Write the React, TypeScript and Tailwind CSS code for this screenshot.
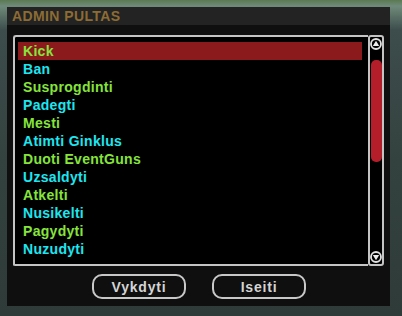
import React from "react";

const items: { t: string; c: string }[] = [
  { t: "Kick", c: "#86e43c" },
  { t: "Ban", c: "#1ee6f0" },
  { t: "Susprogdinti", c: "#86e43c" },
  { t: "Padegti", c: "#1ee6f0" },
  { t: "Mesti", c: "#86e43c" },
  { t: "Atimti Ginklus", c: "#1ee6f0" },
  { t: "Duoti EventGuns", c: "#86e43c" },
  { t: "Uzsaldyti", c: "#1ee6f0" },
  { t: "Atkelti", c: "#86e43c" },
  { t: "Nusikelti", c: "#1ee6f0" },
  { t: "Pagydyti", c: "#86e43c" },
  { t: "Nuzudyti", c: "#1ee6f0" },
];

function Arrow({ up }: { up: boolean }) {
  return (
    <svg width="12" height="12" viewBox="0 0 12 12">
      <circle cx="6" cy="6" r="5" fill="none" stroke="#e0e0e0" strokeWidth="1.8" />
      {up ? (
        <polygon points="6,2.8 9.2,8 2.8,8" fill="#ececec" />
      ) : (
        <polygon points="2.8,4 9.2,4 6,9.2" fill="#ececec" />
      )}
    </svg>
  );
}

export default function App() {
  return (
    <div
      className="w-[402px] h-[316px] overflow-hidden pt-[7px] pl-[7px]"
      style={{
        fontFamily: '"Liberation Sans", Arial, sans-serif',
        background:
          "linear-gradient(180deg, #5b7a52 0px, #6f8a7a 6px, #3d4d4c 30px, #34423f 160px, #2e3b39 316px)",
      }}
    >
      <div className="w-[383px] h-[299px] flex flex-col bg-[#0f0f0f]">
        <div className="h-[18px] bg-[#232323] flex items-center pl-[5px]">
          <span className="text-[14px] font-bold text-[#8d6c34] tracking-[0.4px] leading-none">
            ADMIN PULTAS
          </span>
        </div>
        <div className="flex-1 flex flex-col pt-[10px] px-[6px]">
          <div className="flex h-[231px]">
            <div className="flex-1 border-t-2 border-l-2 border-b-2 border-[#c4c4c4] rounded-tl-[3px] rounded-bl-[2px] bg-black pt-[5px] pl-[3px] pr-[6px]">
              {items.map((it, i) => (
                <div
                  key={it.t}
                  className={
                    "h-[18px] flex items-center pl-[5px] " +
                    (i === 0 ? "bg-[#8a1a1c]" : "")
                  }
                >
                  <span
                    className="text-[14px] font-bold leading-none tracking-[0.3px]"
                    style={{ color: it.c }}
                  >
                    {it.t}
                  </span>
                </div>
              ))}
            </div>
            <div className="w-[16px] border-2 border-[#c4c4c4] rounded-[3px] bg-black flex flex-col items-center py-[1px]">
              <Arrow up />
              <div className="mt-[10px] w-[11px] h-[102px] bg-[#b41e2a] rounded-[5px]" />
              <div className="flex-1" />
              <Arrow up={false} />
            </div>
          </div>
          <div className="flex justify-center gap-[26px] mt-[8px] pl-[1px]">
            <div className="w-[94px] h-[25px] border-2 border-[#c8c8c8] rounded-[10px] flex items-center justify-center">
              <span className="text-[14px] font-bold text-[#d4d4d4] tracking-[0.8px] leading-none">
                Vykdyti
              </span>
            </div>
            <div className="w-[94px] h-[25px] border-2 border-[#c8c8c8] rounded-[10px] flex items-center justify-center">
              <span className="text-[14px] font-bold text-[#d4d4d4] tracking-[0.8px] leading-none">
                Iseiti
              </span>
            </div>
          </div>
        </div>
      </div>
    </div>
  );
}
